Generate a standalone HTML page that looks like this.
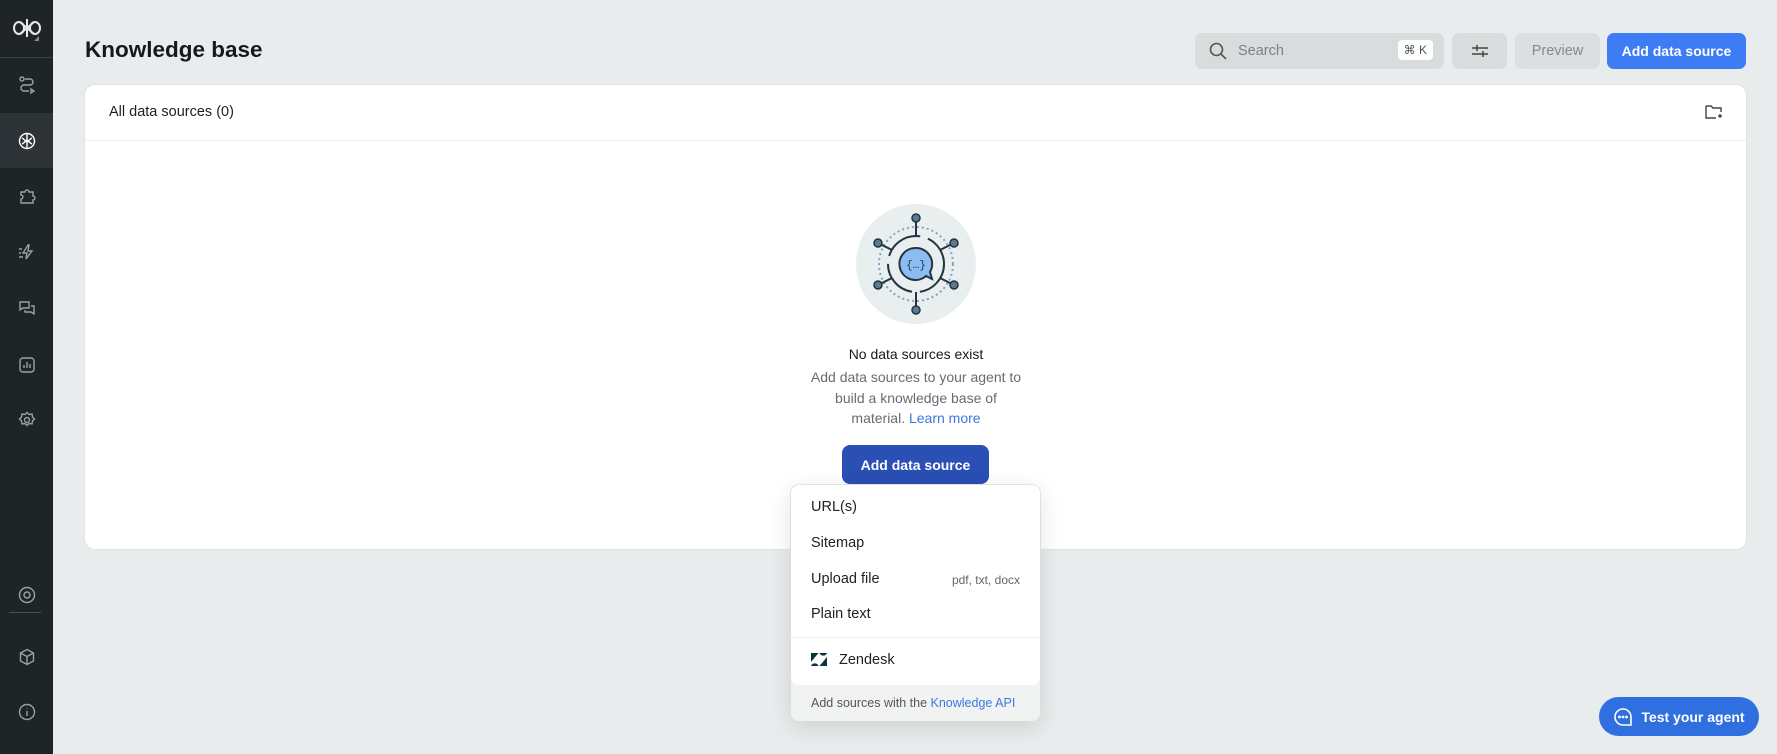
<!DOCTYPE html>
<html><head><style>
*{box-sizing:border-box;margin:0;padding:0}
body{width:1777px;height:754px;background:#e9eced;font-family:"Liberation Sans",sans-serif;position:relative;overflow:hidden;color:#1c1f22}
.sb{position:absolute;left:0;top:0;width:53px;height:754px;background:#1f2427}
.sb .it{position:absolute;left:0;width:53px;height:30px;display:flex;align-items:center;justify-content:center}
.sb svg{stroke:#9aa2a8;fill:none;stroke-width:1.4}
.abs{position:absolute}
.btn{position:absolute;border-radius:7px;display:flex;align-items:center;justify-content:center;font-size:14.5px}
.menu div.r{position:absolute;left:20px;font-size:14.5px;color:#222}
</style></head><body>
<div class="sb">
  <div class="it" style="top:13px"><svg width="30" height="28" viewBox="0 0 30 28" style="stroke:#e6e8ea;stroke-width:2"><path d="M15 5v18M8 8l14 12M22 8L8 20"/><ellipse cx="7" cy="14" rx="5" ry="6"/><ellipse cx="23" cy="14" rx="5" ry="6"/></svg></div>
  <div class="abs" style="left:34px;top:36px;width:0;height:0;border-left:5px solid transparent;border-bottom:5px solid #888"></div>
  <div class="abs" style="left:0;top:57px;width:53px;height:1px;background:#3a4044"></div>
  <div class="it" style="top:70px"><svg width="18" height="18" viewBox="0 0 18 18"><circle cx="4" cy="3" r="2"/><path d="M7 3h5a3 3 0 010 6H6a3 3 0 000 6h5"/><path d="M13 13l3 2-3 2z"/></svg></div>
  <div class="abs" style="left:0;top:113px;width:53px;height:55px;background:#2d3337"></div>
  <div class="it" style="top:126px"><svg width="18" height="18" viewBox="0 0 18 18" style="stroke:#fff"><circle cx="9" cy="9" r="7.5"/><path d="M9 2v14M4 6c2 1 3 3 5 3M14 6c-2 1-3 3-5 3M4 12c2-1 3-3 5-3M14 12c-2-1-3-3-5-3"/></svg></div>
  <div class="it" style="top:181px"><svg width="18" height="18" viewBox="0 0 18 18"><path d="M3 5h4a2 2 0 014 0h4v4a2 2 0 010 4v3H3v-4a2 2 0 000-4z"/></svg></div>
  <div class="it" style="top:237px"><svg width="18" height="18" viewBox="0 0 18 18"><path d="M10 2L5 10h4l-1 6 6-8h-4l1-6zM1 6h3M1 10h2M1 14h4"/></svg></div>
  <div class="it" style="top:293px"><svg width="18" height="18" viewBox="0 0 18 18"><path d="M2 3h9v6H5l-3 2zM7 11v2h6l3 2V7h-3"/></svg></div>
  <div class="it" style="top:350px"><svg width="18" height="18" viewBox="0 0 18 18"><rect x="2" y="2" width="14" height="14" rx="3"/><path d="M6 12V9M9 12V6M12 12V8"/></svg></div>
  <div class="it" style="top:405px"><svg width="18" height="18" viewBox="0 0 18 18"><circle cx="9" cy="9" r="2.5"/><path d="M9 1.5l2 2 3-.5.5 3 2 2-2 2-.5 3-3-.5-2 2-2-2-3 .5-.5-3-2-2 2-2 .5-3 3 .5z"/></svg></div>
  <div class="it" style="top:580px"><svg width="18" height="18" viewBox="0 0 18 18"><circle cx="9" cy="9" r="7.5"/><circle cx="9" cy="9" r="3"/></svg></div>
  <div class="abs" style="left:9px;top:612px;width:32px;height:1px;background:#4a5054"></div>
  <div class="it" style="top:642px"><svg width="18" height="18" viewBox="0 0 18 18"><path d="M9 1.5l6.5 3.5v8L9 16.5 2.5 13V5zM2.5 5L9 8.5 15.5 5M9 8.5v8"/></svg></div>
  <div class="it" style="top:697px"><svg width="18" height="18" viewBox="0 0 18 18"><circle cx="9" cy="9" r="7.5"/><path d="M9 8v5M9 5.5v.5"/></svg></div>
</div>

<div class="abs" style="left:85px;top:37px;font-size:22.5px;font-weight:bold;color:#16191c">Knowledge base</div>

<div class="btn" style="left:1195px;top:33px;width:249px;height:36px;background:#d9dcdd;justify-content:flex-start;padding-left:13px;color:#7b8186">
 <svg width="20" height="20" viewBox="0 0 20 20" fill="none" stroke="#555" stroke-width="1.6"><circle cx="8.5" cy="8.5" r="6"/><path d="M13 13l5 5"/></svg>
 <span style="margin-left:10px">Search</span>
 <span style="position:absolute;right:11px;top:7px;background:#fff;border-radius:4px;font-size:12px;color:#555;padding:3px 6px">⌘ K</span>
</div>
<div class="btn" style="left:1452px;top:33px;width:55px;height:36px;background:#d9dcdd"><svg width="18" height="14" viewBox="0 0 18 14" stroke="#444" stroke-width="1.5"><path d="M1 4h16M1 10h16M6 1v6M12 7v6"/></svg></div>
<div class="btn" style="left:1515px;top:33px;width:85px;height:36px;background:#dcdfe0;color:#858b90">Preview</div>
<div class="btn" style="left:1607px;top:33px;width:139px;height:36px;background:#3d7cf4;color:#fff;font-weight:bold;font-size:14px">Add data source</div>

<div class="abs" style="left:85px;top:85px;width:1661px;height:464px;background:#fff;border-radius:10px;box-shadow:0 0 0 1px #e0e4e5">
  <div class="abs" style="left:24px;top:19px;font-size:14.5px">All data sources (0)</div>
  <svg class="abs" style="left:1620px;top:19px" width="18" height="16" viewBox="0 0 18 16" fill="none" stroke="#444" stroke-width="1.4"><path d="M1 2h5l2 2h8v4M1 2v12h10M13 12h4M15 10v4"/></svg>
  <div class="abs" style="left:0;top:55px;width:100%;height:1px;background:#eceeef"></div>
</div>

<svg class="abs" style="left:856px;top:204px" width="120" height="120" viewBox="0 0 120 120">
 <circle cx="60" cy="60" r="60" fill="#e9eeef"/>
 <circle cx="60" cy="60" r="37" fill="none" stroke="#7fa6c0" stroke-width="2" stroke-dasharray="2 3"/>
 <circle cx="60" cy="60" r="28" fill="none" stroke="#23333f" stroke-width="2" stroke-dasharray="40 8"/>
 <g stroke="#23333f" stroke-width="2"><path d="M60 32V16M60 88v16M36 46l-12-6M84 46l12-6M36 74l-12 6M84 74l12 6"/></g>
 <g fill="#5d7b8f" stroke="#23333f" stroke-width="1.5"><circle cx="60" cy="14" r="4"/><circle cx="60" cy="106" r="4"/><circle cx="22" cy="39" r="4"/><circle cx="98" cy="39" r="4"/><circle cx="22" cy="81" r="4"/><circle cx="98" cy="81" r="4"/></g>
 <path d="M60 44a16 16 0 1 0 10 28l6 3-2-7a16 16 0 0 0-14-24z" fill="#8bbdf2" stroke="#23333f" stroke-width="2"/>
 <text x="60" y="64" font-size="11" text-anchor="middle" fill="#23333f" font-family="Liberation Mono">{…}</text>
</svg>

<div class="abs" style="left:716px;top:346px;width:400px;text-align:center;font-size:14px;color:#16191c">No data sources exist</div>
<div class="abs" style="left:766px;top:367px;width:300px;text-align:center;font-size:14px;line-height:20.5px;color:#666c70">Add data sources to your agent to<br>build a knowledge base of<br>material. <span style="color:#3c78e0">Learn more</span></div>
<div class="btn" style="left:842px;top:445px;width:147px;height:39px;background:#2a4fb5;color:#fff;font-weight:bold;border-radius:8px;font-size:14px">Add data source</div>

<div class="abs menu" style="left:791px;top:485px;width:249px;height:236px;background:#f1f3f3;border-radius:8px;box-shadow:0 6px 24px rgba(0,0,0,.12),0 0 0 1px #e8eaeb;overflow:hidden">
  <div class="abs" style="left:0;top:0;width:249px;height:200px;background:#fff;border-radius:0 0 8px 8px"></div>
  <div class="r" style="top:14px">URL(s)</div>
  <div class="r" style="top:50px">Sitemap</div>
  <div class="r" style="top:86px">Upload file</div>
  <div class="abs" style="right:20px;top:88px;font-size:12px;color:#666">pdf, txt, docx</div>
  <div class="r" style="top:121px">Plain text</div>
  <div class="abs" style="left:0;top:152px;width:249px;height:1px;background:#eceeef"></div>
  <svg class="abs" style="left:20px;top:168px" width="16" height="13" viewBox="0 0 16 13" fill="#03363d"><path d="M0 0h7.5L0 9zM8.5 13L16 4v9zM8.5 0a4 4 0 0 0 7.5 0zM0 13a4 4 0 0 1 7.5 0z"/></svg>
  <div class="r" style="top:167px;left:48px">Zendesk</div>
  <div class="abs" style="left:20px;top:211px;font-size:12.5px;color:#555">Add sources with the <span style="color:#3c78e0">Knowledge API</span></div>
</div>

<div class="btn" style="left:1599px;top:697px;width:160px;height:39px;background:#2f6fe0;color:#fff;font-weight:bold;border-radius:20px;font-size:14px">
 <svg width="20" height="20" viewBox="0 0 20 20" fill="none" stroke="#fff" stroke-width="1.6" style="margin-right:8px"><path d="M10 2a8 8 0 1 0 0 16h8v-8a8 8 0 0 0-8-8z"/><circle cx="6.5" cy="10" r=".6" fill="#fff"/><circle cx="10" cy="10" r=".6" fill="#fff"/><circle cx="13.5" cy="10" r=".6" fill="#fff"/></svg>Test your agent</div>
</body></html>
